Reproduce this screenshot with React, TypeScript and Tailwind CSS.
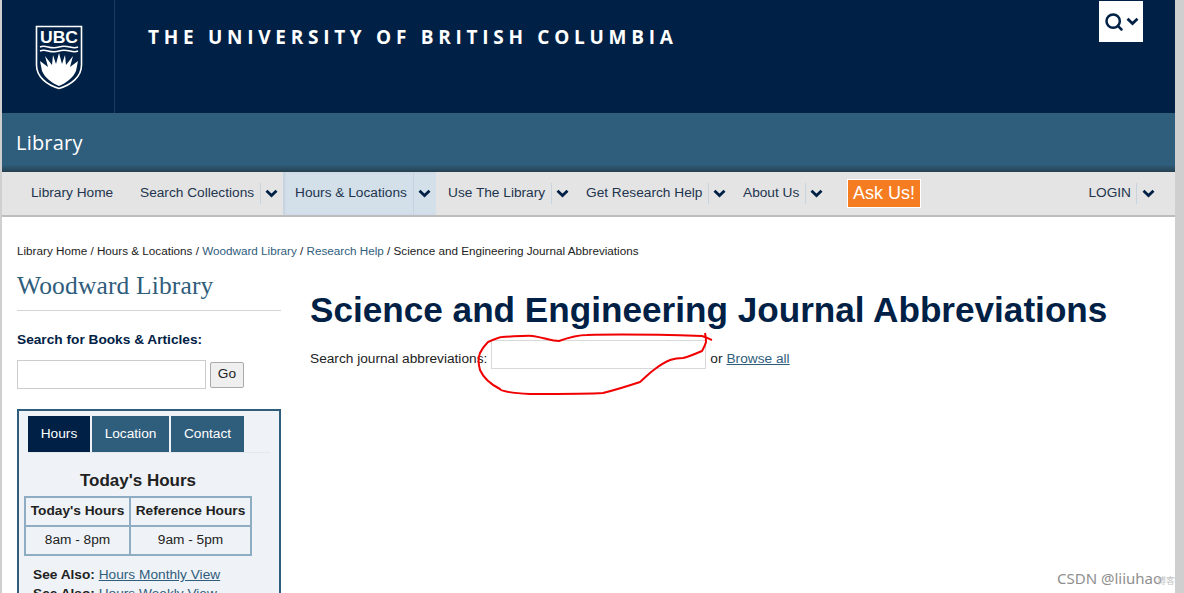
import { Search } from 'lucide-react';

const navItems = [
    { label: 'Search Collections', width: 'w-[155px]' },
    { label: 'Hours & Locations', width: 'w-[153px]', active: true },
    { label: 'Use The Library', width: 'w-[138px]' },
    { label: 'Get Research Help', width: 'w-[157px]' },
    { label: 'About Us', width: 'w-[104px]' },
];

const Chevron = () => (
    <svg width="13" height="9" viewBox="0 0 13 9" className="text-[#002145]">
        <path d="M1.5 1.7L6.5 6.5L11.5 1.7" fill="none" stroke="currentColor" strokeWidth="2.8" />
    </svg>
);

const NavItem = ({ label, width, active }: { label: string; width: string; active?: boolean }) => (
    <div className={`flex items-center h-full pl-[12px] whitespace-nowrap ${width} ${active ? 'bg-[#d3dfe9] shadow-[inset_2px_0_2px_#c5d3df]' : ''}`}>
        <span>{label}</span>
        <span className={`ml-[6px] flex items-center justify-center w-[22px] ${active ? 'self-stretch border-l border-[#c5d3df]' : 'h-[21px] border-l border-[#c8d4de]'}`}>
            <Chevron />
        </span>
    </div>
);

const App = () => {
    return (
        <div className="relative flex h-[593px] w-[1184px] overflow-hidden bg-white font-['Liberation_Sans',sans-serif] text-[13.7px] text-[#222]">
            <div className="w-[2px] shrink-0 bg-[#cfcfcf]" />
            <div className="flex-1 min-w-0">
                {/* header */}
                <header className="flex h-[113px] bg-[#002145]">
                    <div className="flex h-full w-[113px] items-start border-r border-[#1c3a5c] pt-[25px] pl-[33px]">
                        <svg width="48" height="65" viewBox="0 0 48 65">
                            <path d="M1.5 1.5H46.5V40C46.5 52 36 60 24 63.5C12 60 1.5 52 1.5 40Z" fill="#002145" stroke="#fff" strokeWidth="1.6" />
                            <path d="M5 36L13 42L10 31L17 40L18 30L21 39L24 28L27 39L30 30L31 40L38 31L35 42L43 36L41 46C38 53 31 58 24 61C17 58 10 53 7 46Z" fill="#fff" />
                            <path d="M5 22C11 19 15 25 24 22C33 19 37 25 43 22M5 26C11 23 15 29 24 26C33 23 37 29 43 26" fill="none" stroke="#fff" strokeWidth="1.5" />
                            <text x="24" y="18" textAnchor="middle" fill="#fff" fontSize="16.5" fontWeight="700" fontFamily="Liberation Sans" textLength="38" lengthAdjust="spacingAndGlyphs">UBC</text>
                        </svg>
                    </div>
                    <div className="flex-1 pl-[33px] pt-[24px] font-['Open_Sans',sans-serif] text-[19px] leading-[26px] font-bold tracking-[4.72px] whitespace-nowrap text-white">
                        THE UNIVERSITY OF BRITISH COLUMBIA
                    </div>
                    <div className="mt-[1px] mr-[32px] flex h-[41px] w-[44px] items-center justify-center gap-[2px] bg-white text-[#002145]">
                        <Search size={20} strokeWidth={3} />
                        <Chevron />
                    </div>
                </header>

                {/* unit band */}
                <div className="flex h-[59px] items-center bg-gradient-to-b from-[#2f5d7c] from-88% to-[#26404f] pl-[14px] pt-[1px]">
                    <span className="font-['Open_Sans',sans-serif] text-[20px] tracking-[0.2px] text-white">Library</span>
                </div>

                {/* nav */}
                <nav className="flex h-[45px] items-center border-b-2 border-b-[#bdbdbd] bg-[#e4e4e4] text-[#22344e]">
                    <div className="flex h-full w-[126px] items-center pl-[29px] whitespace-nowrap">Library Home</div>
                    {navItems.map((item) => (
                        <NavItem key={item.label} {...item} />
                    ))}
                    <div className="ml-[12px] flex h-[29px] w-[74px] items-center justify-center border border-white bg-[#f57c20] text-[18px] whitespace-nowrap text-white">
                        Ask Us!
                    </div>
                    <div className="ml-auto mr-[15px] flex items-center">
                        <span className="pr-[5px]">LOGIN</span>
                        <span className="flex h-[21px] w-[24px] items-center justify-center border-l border-[#c8d4de]">
                            <Chevron />
                        </span>
                    </div>
                </nav>

                {/* breadcrumb */}
                <div className="pt-[26px] pl-[15px] text-[11.7px] leading-[16px]">
                    Library Home / Hours &amp; Locations /{' '}
                    <span className="text-[#2f5d7c]">Woodward Library</span> /{' '}
                    <span className="text-[#2f5d7c]">Research Help</span> / Science and Engineering Journal Abbreviations
                </div>

                <div className="flex pt-[11px] pl-[15px]">
                    {/* sidebar */}
                    <aside className="w-[264px] shrink-0">
                        <h2 className="border-b border-[#d5d5d5] pb-[8px] font-['Liberation_Serif',serif] text-[25.5px] leading-[32px] tracking-[0.15px] text-[#2f5d7c]">
                            Woodward Library
                        </h2>
                        <p className="mt-[21px] leading-[16px] font-bold text-[#002145]">Search for Books &amp; Articles:</p>
                        <div className="mt-[12px] flex items-center gap-[4px]">
                            <div className="h-[29px] w-[189px] border border-[#ccc] bg-white" />
                            <div className="flex h-[26px] w-[34px] items-center justify-center rounded-[2px] border border-[#aaa] bg-[#efefef] text-[#222]">Go</div>
                        </div>
                        <div className="mt-[20px] h-[200px] border-2 border-b-0 border-[#2f5d7c] bg-[#eff3f7] pt-[5px]">
                            <div className="mx-[9px] flex h-[37px] gap-[2px] border-b border-[#e4e8ec] text-white">
                                <div className="flex w-[62px] items-center justify-center bg-[#002145]">Hours</div>
                                <div className="flex w-[77px] items-center justify-center bg-[#2f5d7c]">Location</div>
                                <div className="flex w-[73px] items-center justify-center bg-[#2f5d7c]">Contact</div>
                            </div>
                            <h3 className="mt-[18px] pr-[22px] text-center text-[17px] leading-[20px] font-bold text-[#222]">Today's Hours</h3>
                            <table className="mt-[5px] ml-[5px] border-collapse border-2 border-[#8fadc2] text-center">
                                <tbody>
                                    <tr className="h-[29px]">
                                        <th className="w-[105px] border-2 border-[#8fadc2] font-bold">Today's Hours</th>
                                        <th className="w-[121px] border-2 border-[#8fadc2] font-bold">Reference Hours</th>
                                    </tr>
                                    <tr className="h-[29px]">
                                        <td className="border-2 border-[#8fadc2]">8am - 8pm</td>
                                        <td className="border-2 border-[#8fadc2]">9am - 5pm</td>
                                    </tr>
                                </tbody>
                            </table>
                            <p className="mt-[9px] ml-[14px] leading-[20px]">
                                <strong>See Also:</strong> <span className="text-[#2f5d7c] underline">Hours Monthly View</span>
                            </p>
                            <p className="ml-[14px] leading-[17px]">
                                <strong>See Also:</strong> <span className="text-[#2f5d7c] underline">Hours Weekly View</span>
                            </p>
                        </div>
                    </aside>

                    {/* main */}
                    <main className="pl-[29px]">
                        <h1 className="mt-[18px] text-[35.15px] leading-[44px] font-bold whitespace-nowrap text-[#002145]">
                            Science and Engineering Journal Abbreviations
                        </h1>
                        <div className="mt-[8px] flex items-center">
                            <span>Search journal abbreviations:</span>
                            <div className="ml-[4px] mb-[10px] h-[29px] w-[215px] border border-[#d8d8d8] bg-white" />
                            <span className="ml-[4px]">or</span>
                            <span className="ml-[4px] text-[#2f5d7c] underline">Browse all</span>
                        </div>
                    </main>
                </div>
            </div>
            <div className="w-[9px] shrink-0 bg-[#cfcfcf]" />

            {/* hand-drawn annotation */}
            <svg className="absolute inset-0 pointer-events-none" width="1184" height="593">
                <path
                    d="M705 333C706 337 706 340 706 342C705 346 703 349 702 351C695 354 688 357 683 358C675 358 668 359 655 369C648 374 645 378 640 382C628 386 615 390 603 393C590 394 565 394 530 394C512 393 500 391 500 389C490 384 484 379 480 370C478 363 478 358 480 353C483 347 486 344 488 342C495 339 500 337 502 337C520 336 530 335 533 336C545 338 552 341 559 341C570 337 580 335 587 335C620 334 670 335 702 336C706 337 709 339 712 340"
                    fill="none"
                    stroke="#f00000"
                    strokeWidth="2"
                />
            </svg>
            <div className="absolute right-[9px] bottom-[3px] flex items-baseline font-['Noto_Sans','Noto_Sans_CJK_SC',sans-serif] text-[15px] leading-[18px] whitespace-nowrap text-[#8f8f8f]">
                CSDN @liiuhao
                <span className="-ml-[8px] text-[9px] text-[#c4c4c4]">-博客</span>
            </div>
        </div>
    );
};

export default App;
